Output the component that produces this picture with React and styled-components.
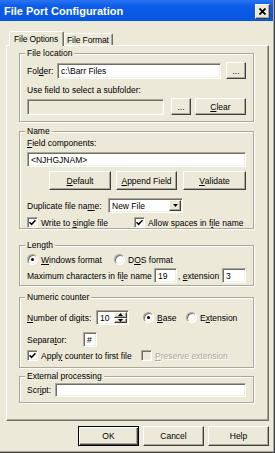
import styled, { createGlobalStyle } from 'styled-components';

const GlobalStyle = createGlobalStyle`
  html, body {
    margin: 0;
    padding: 0;
    background: #ECE9D8;
  }
  body {
    font-family: "Liberation Sans", Arial, sans-serif;
    font-size: 8.5px;
    color: #000;
  }
`;

const Window = styled.div`
  width: 275px;
  height: 453px;
  box-sizing: border-box;
  background: #ECE9D8;
  box-shadow: inset -1px -1px 0 #404040, inset -2px -2px 0 #ACA899;
  display: flex;
  flex-direction: column;
  overflow: hidden;
`;

const TitleBar = styled.div`
  height: 21px;
  width: 273px;
  flex: none;
  background: linear-gradient(#2A74F2, #0B5CE8 30%, #0656E0);
  display: flex;
  align-items: center;
  justify-content: space-between;
  padding: 0 3px 0 4px;
  box-sizing: border-box;
`;

const Title = styled.span`
  color: #fff;
  font-weight: bold;
  font-size: 11px;
`;

const CloseBtn = styled.div`
  width: 15px;
  height: 15px;
  margin-top: 2px;
  box-sizing: border-box;
  background: #ECE9D8;
  border: 1px solid;
  border-color: #fff #404040 #404040 #fff;
  box-shadow: inset -1px -1px 0 #ACA899;
  display: flex;
  align-items: center;
  justify-content: center;
`;

const Body = styled.div`
  padding: 10px 6px 0 6px;
  display: flex;
  flex-direction: column;
`;

const TabStrip = styled.div`
  height: 14px;
  display: flex;
  align-items: flex-end;
  padding-left: 3px;
  position: relative;
  z-index: 1;
`;

const Tab = styled.div`
  width: ${(p) => p.$w}px;
  height: ${(p) => (p.$active ? 15 : 12)}px;
  margin-bottom: ${(p) => (p.$active ? -1 : 0)}px;
  box-sizing: border-box;
  background: #ECE9D8;
  border-top: 1px solid #fff;
  border-left: 1px solid #fff;
  border-right: 1px solid #716F64;
  border-radius: 2px 2px 0 0;
  box-shadow: inset -1px 0 0 #ACA899;
  padding-left: ${(p) => p.$pl}px;
  display: flex;
  align-items: center;
  white-space: nowrap;
  letter-spacing: -0.1px;
`;

const Panel = styled.div`
  width: 263px;
  height: 376px;
  box-sizing: border-box;
  border: 1px solid;
  border-color: #fff #716F64 #716F64 #fff;
  box-shadow: inset -1px -1px 0 #ACA899;
  padding-left: 12px;
  display: flex;
  flex-direction: column;
`;

const Group = styled.div`
  position: relative;
  box-sizing: border-box;
  width: 235px;
  height: ${(p) => p.$h}px;
  margin-top: ${(p) => p.$mt}px;
  flex: none;
  border: 1px solid #ACA899;
  box-shadow: inset 1px 1px 0 #fff, 1px 1px 0 #fff;
  padding: 0 7px;
`;

const Legend = styled.span`
  position: absolute;
  top: -6px;
  left: 5px;
  padding: 0 2px;
  line-height: 10px;
  background: #ECE9D8;
  white-space: nowrap;
`;

const Row = styled.div`
  display: flex;
  align-items: center;
  height: ${(p) => p.$h}px;
  margin-top: ${(p) => p.$mt}px;
  justify-content: ${(p) => (p.$end ? 'flex-end' : 'flex-start')};
`;

const Label = styled.span`
  flex: none;
  width: ${(p) => (p.$w ? `${p.$w}px` : 'auto')};
  margin-left: ${(p) => p.$ml || 0}px;
  white-space: nowrap;
  color: ${(p) => (p.$disabled ? '#ACA899' : '#000')};
  text-shadow: ${(p) => (p.$disabled ? '1px 1px 0 #fff' : 'none')};
`;

const Acc = styled.span`
  text-decoration: underline;
`;

const Field = styled.div`
  flex: none;
  width: ${(p) => p.$w}px;
  height: ${(p) => p.$h || 15}px;
  margin-left: ${(p) => p.$ml || 0}px;
  box-sizing: border-box;
  background: ${(p) => (p.$disabled ? '#ECE9D8' : '#fff')};
  border: 1px solid;
  border-color: #ACA899 #fff #fff #ACA899;
  box-shadow: inset 1px 1px 0 #716F64, inset -1px -1px 0 #F1EFE2;
  padding-left: 3px;
  display: flex;
  align-items: center;
  white-space: nowrap;
  overflow: hidden;
  position: relative;
`;

const Btn = styled.div`
  flex: none;
  width: ${(p) => p.$w}px;
  height: ${(p) => p.$h || 17}px;
  margin-left: ${(p) => p.$ml || 0}px;
  box-sizing: border-box;
  background: #ECE9D8;
  border: 1px solid;
  border-color: ${(p) => (p.$default ? '#000' : '#fff #404040 #404040 #fff')};
  box-shadow: ${(p) =>
    p.$default
      ? 'inset 1px 1px 0 #fff, inset -1px -1px 0 #404040, inset -2px -2px 0 #ACA899'
      : 'inset -1px -1px 0 #ACA899'};
  display: flex;
  align-items: center;
  justify-content: center;
  white-space: nowrap;
`;

const ArrowBtn = styled.div`
  position: absolute;
  right: 1px;
  top: 1px;
  bottom: 1px;
  width: 12px;
  box-sizing: border-box;
  background: #ECE9D8;
  border: 1px solid;
  border-color: #fff #404040 #404040 #fff;
  box-shadow: inset -1px -1px 0 #ACA899;
  display: flex;
  align-items: center;
  justify-content: center;
`;

const Spin = styled.div`
  position: absolute;
  right: 1px;
  top: 1px;
  bottom: 1px;
  width: 13px;
  display: flex;
  flex-direction: column;
`;

const SpinHalf = styled.div`
  flex: 1;
  box-sizing: border-box;
  background: #ECE9D8;
  border: 1px solid;
  border-color: #fff #404040 #404040 #fff;
  box-shadow: inset -1px -1px 0 #ACA899;
  display: flex;
  align-items: center;
  justify-content: center;
`;

const Option = styled.div`
  flex: none;
  display: flex;
  align-items: center;
  width: ${(p) => (p.$w ? `${p.$w}px` : 'auto')};
  margin-left: ${(p) => p.$ml || 0}px;
`;

const Box = styled.span`
  flex: none;
  width: 11px;
  height: 11px;
  box-sizing: border-box;
  background: ${(p) => (p.$disabled ? '#ECE9D8' : '#fff')};
  border: 1px solid;
  border-color: #ACA899 #fff #fff #ACA899;
  box-shadow: inset 1px 1px 0 #716F64, inset -1px -1px 0 #F1EFE2;
  border-radius: ${(p) => (p.$round ? '50%' : '0')};
  display: flex;
  align-items: center;
  justify-content: center;
  margin-right: 3px;
`;

const Dot = styled.span`
  width: 3px;
  height: 3px;
  border-radius: 50%;
  background: #000;
`;

const Footer = styled.div`
  display: flex;
  justify-content: flex-end;
  gap: 4px;
  margin-top: 5px;
`;

function Check({ checked, disabled, children, w, ml }) {
  return (
    <Option $w={w} $ml={ml}>
      <Box $disabled={disabled}>
        {checked && (
          <svg width="7" height="7" viewBox="0 0 7 7">
            <path d="M0.5 3.2 L2.6 5.3 L6.5 1.2" stroke="#000" strokeWidth="1.6" fill="none" />
          </svg>
        )}
      </Box>
      <Label $disabled={disabled}>{children}</Label>
    </Option>
  );
}

function Radio({ checked, children, w, ml }) {
  return (
    <Option $w={w} $ml={ml}>
      <Box $round>{checked && <Dot />}</Box>
      <Label>{children}</Label>
    </Option>
  );
}

const Tri = ({ up }) => (
  <svg width="5" height="3" viewBox="0 0 5 3">
    <path d={up ? 'M0 3 L2.5 0 L5 3 Z' : 'M0 0 L5 0 L2.5 3 Z'} fill="#000" />
  </svg>
);

export default function App() {
  return (
    <>
      <GlobalStyle />
      <Window>
        <TitleBar>
          <Title>File Port Configuration</Title>
          <CloseBtn>
            <svg width="7" height="7" viewBox="0 0 7 7">
              <path d="M0.5 0.5 L6.5 6.5 M6.5 0.5 L0.5 6.5" stroke="#000" strokeWidth="1.8" />
            </svg>
          </CloseBtn>
        </TitleBar>

        <Body>
          <TabStrip>
            <Tab $active $w={55} $pl={4}>File Options</Tab>
            <Tab $w={49} $pl={2}>File Format</Tab>
          </TabStrip>

          <Panel>
            <Group $h={69} $mt={7}>
              <Legend>File location</Legend>
              <Row $h={17} $mt={8}>
                <Label $w={30}>Fol<Acc>d</Acc>er:</Label>
                <Field $w={164} $h={16}>c:\Barr Files</Field>
                <Btn $w={20} $ml={5}>...</Btn>
              </Row>
              <Row $h={10} $mt={6}>
                <Label>Use field to select a subfolder:</Label>
              </Row>
              <Row $h={17} $mt={3}>
                <Field $w={137} $h={16} $disabled />
                <Btn $w={20} $ml={7}>...</Btn>
                <Btn $w={51} $ml={4}><Acc>C</Acc>lear</Btn>
              </Row>
            </Group>

            <Group $h={98} $mt={9}>
              <Legend>Name</Legend>
              <Row $h={10} $mt={6}>
                <Label><Acc>F</Acc>ield components:</Label>
              </Row>
              <Row $h={15} $mt={4}>
                <Field $w={219}>&lt;NJHGJNAM&gt;</Field>
              </Row>
              <Row $h={19} $mt={4} $end>
                <Btn $w={62} $h={19}><Acc>D</Acc>efault</Btn>
                <Btn $w={61} $h={19} $ml={5}><Acc>A</Acc>ppend Field</Btn>
                <Btn $w={63} $h={19} $ml={6}><Acc>V</Acc>alidate</Btn>
              </Row>
              <Row $h={15} $mt={8}>
                <Label $w={81}>Duplicate file na<Acc>m</Acc>e:</Label>
                <Field $w={75}>
                  New File
                  <ArrowBtn><Tri /></ArrowBtn>
                </Field>
              </Row>
              <Row $h={11} $mt={4}>
                <Check checked w={107}>Write to <Acc>s</Acc>ingle file</Check>
                <Check checked>Allow spaces in f<Acc>i</Acc>le name</Check>
              </Row>
            </Group>

            <Group $h={41} $mt={16}>
              <Legend>Length</Legend>
              <Row $h={11} $mt={8}>
                <Radio checked w={87}><Acc>W</Acc>indows format</Radio>
                <Radio>D<Acc>O</Acc>S format</Radio>
              </Row>
              <Row $h={15} $mt={3}>
                <Label $w={127}>Maximum characters in fi<Acc>l</Acc>e name</Label>
                <Field $w={23}>19</Field>
                <Label $w={44} $ml={1}>, <Acc>e</Acc>xtension</Label>
                <Field $w={24}>3</Field>
              </Row>
            </Group>

            <Group $h={71} $mt={11}>
              <Legend>Numeric counter</Legend>
              <Row $h={15} $mt={12}>
                <Label $w={69}><Acc>N</Acc>umber of digits:</Label>
                <Field $w={33}>
                  10
                  <Spin>
                    <SpinHalf><Tri up /></SpinHalf>
                    <SpinHalf><Tri /></SpinHalf>
                  </Spin>
                </Field>
                <Radio checked w={43} ml={14}><Acc>B</Acc>ase</Radio>
                <Radio>E<Acc>x</Acc>tension</Radio>
              </Row>
              <Row $h={15} $mt={7}>
                <Label $w={56}>Separa<Acc>t</Acc>or:</Label>
                <Field $w={14}>#</Field>
              </Row>
              <Row $h={11} $mt={3}>
                <Check checked w={114}>Appl<Acc>y</Acc> counter to first file</Check>
                <Check disabled><Acc>P</Acc>reserve extension</Check>
              </Row>
            </Group>

            <Group $h={27} $mt={8}>
              <Legend>External processing</Legend>
              <Row $h={14} $mt={6}>
                <Label $w={28}>Scr<Acc>i</Acc>pt:</Label>
                <Field $w={191} $h={14} />
              </Row>
            </Group>
          </Panel>

          <Footer>
            <Btn $w={61} $h={20} $default>OK</Btn>
            <Btn $w={61} $h={20}>Cancel</Btn>
            <Btn $w={61} $h={20}>Help</Btn>
          </Footer>
        </Body>
      </Window>
    </>
  );
}
